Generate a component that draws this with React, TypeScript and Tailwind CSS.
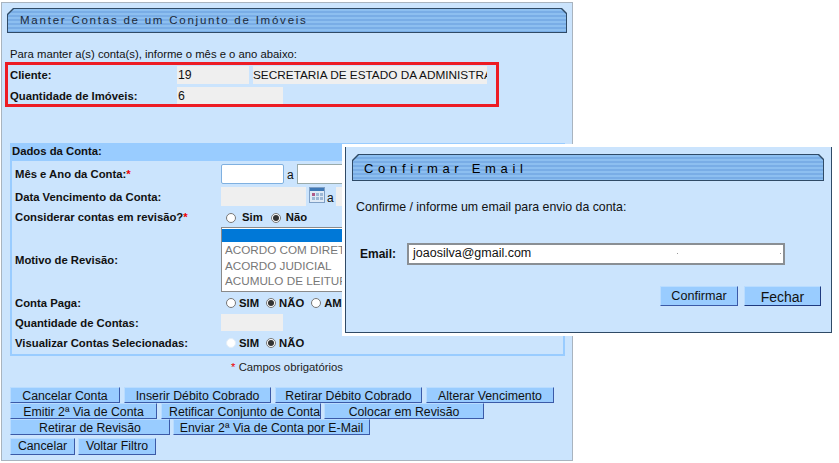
const font = "font-['Liberation_Sans',Arial,sans-serif]";

function TitleBar({ className }: { className: string }) {
  return (
    <div className={`bg-[#2f4a66] p-px ${className} [clip-path:polygon(6px_0,calc(100%-5px)_0,100%_5px,100%_100%,0_100%,0_6px)]`}>
      <div className="h-full bg-[repeating-linear-gradient(180deg,#8dbff0_0px,#8dbff0_2px,#79ade6_2px,#79ade6_4px)] [clip-path:polygon(6px_0,calc(100%-5px)_0,100%_5px,100%_100%,0_100%,0_6px)]" />
    </div>
  );
}

function Btn({ w, label, className = "h-4 pt-[2px] text-center" }: { w: string; label: string; className?: string }) {
  return (
    <button
      className={`${w} shrink-0 overflow-hidden whitespace-nowrap border border-t-[#b9dcff] border-l-[#b9dcff] border-r-[#3b5aa8] border-b-[#3b5aa8] bg-[#99ccff] text-[12.3px] leading-none text-[#111] ${className}`}
    >
      {label}
    </button>
  );
}

function Radio({ on = false, faint = false, label, labelGap = "mr-[3px]", gap = "mr-[7px]" }: { on?: boolean; faint?: boolean; label: string; labelGap?: string; gap?: string }) {
  return (
    <span className={`flex items-center ${gap}`}>
      <span className={`${labelGap} flex h-[10px] w-[10px] items-center justify-center rounded-full border bg-white ${faint ? "border-[#e4eef8]" : "border-[#777]"}`}>
        {on && <span className="h-[6px] w-[6px] rounded-full bg-[#333]" />}
      </span>
      <b className="text-[11.3px] text-[#111]">{label}</b>
    </span>
  );
}

function Row({ label, h, star = false, nudge = "", children }: { label: string; h: string; star?: boolean; nudge?: string; children?: React.ReactNode }) {
  return (
    <div className={`flex ${h} items-center`}>
      <div className={`w-[209px] pl-[3px] text-[11.3px] font-bold text-[#111] ${nudge}`}>
        {label}
        {star && <span className="text-[#e00]">*</span>}
      </div>
      <div className="flex flex-1 items-center text-[12px] text-[#111]">{children}</div>
    </div>
  );
}

function CalendarIcon() {
  return (
    <svg width="16" height="16" viewBox="0 0 16 16" className="mb-[3px] ml-[3px] shrink-0">
      <rect x="0.5" y="0.5" width="15" height="15" fill="#dfeaf6" stroke="#7f9fc4" />
      <rect x="1" y="1" width="14" height="3" fill="#3f78b5" />
      <rect x="3" y="6" width="3" height="3" fill="#b05a8a" />
      <rect x="7" y="6" width="3" height="3" fill="#9db8d6" />
      <rect x="11" y="6" width="3" height="3" fill="#9db8d6" />
      <rect x="3" y="10" width="3" height="3" fill="#9db8d6" />
      <rect x="7" y="10" width="3" height="3" fill="#9db8d6" />
      <rect x="11" y="10" width="3" height="3" fill="#9db8d6" />
    </svg>
  );
}

export default function App() {
  return (
    <div className={`relative h-[463px] w-[839px] overflow-hidden bg-white text-black ${font}`}>
      {/* Main panel */}
      <div className="ml-[1px] mt-[2px] h-[459px] w-[572px] border border-[#a9b4bf] bg-[#cbe4fd] px-[5px] pt-[5px]">
        <div className="relative h-[25px] w-[560px]">
          <TitleBar className="h-[25px] w-[560px]" />
          <div className="absolute left-[13px] top-0 flex h-[25px] items-center whitespace-nowrap text-[11.5px] tracking-[1.77px] text-[#1c2a3a]">
            Manter Contas de um Conjunto de Imóveis
          </div>
        </div>

        <p className="mt-[14px] pl-[3px] text-[11.3px] leading-[14px] text-[#111]">
          Para manter a(s) conta(s), informe o mês e o ano abaixo:
        </p>

        {/* Highlighted customer data */}
        <div className="-ml-[2px] mt-[1px] h-[45px] w-[494px] border-[3px] border-[#ed1c24] pl-[2px]">
          <div className="mt-[1px] flex h-[18px] items-center">
            <b className="w-[167px] text-[11.3px] text-[#111]">Cliente:</b>
            <div className="h-[18px] w-[72px] bg-[#efefef] pl-[1px] text-[12.3px] leading-[18px] text-[#111]">19</div>
            <div className="ml-[4px] h-[18px] w-[234px] overflow-hidden whitespace-nowrap bg-[#efefef] text-[11.8px] leading-[18px] text-[#111]">
              SECRETARIA DE ESTADO DA ADMINISTRA
            </div>
          </div>
          <div className="mt-[3px] flex h-[17px] items-center">
            <b className="w-[167px] pt-[2px] text-[11.3px] text-[#111]">Quantidade de Imóveis:</b>
            <div className="h-[17px] w-[106px] bg-[#efefef] pl-[1px] text-[12.3px] leading-[19px] text-[#111]">6</div>
          </div>
        </div>

        {/* Dados da Conta */}
        <div className="ml-[3px] mt-[36px] h-[213px] w-[555px] border-2 border-t-0 border-[#99ccff]">
          <div className="-mx-[2px] h-[18px] bg-[#99ccff] pl-[2px] text-[11.3px] font-bold leading-[17px] text-[#111]">
            Dados da Conta:
          </div>
          <Row label="Mês e Ano da Conta:" star h="h-[25px]" nudge="pt-[2px]">
            <div className="h-[20px] w-[63px] rounded-[2px] border border-[#7fb0e0] bg-white" />
            <span className="ml-[3px] mr-[3px] pt-[2px]">a</span>
            <div className="h-[20px] w-[63px] border border-[#9aa] bg-white" />
          </Row>
          <Row label="Data Vencimento da Conta:" h="h-[21px]" nudge="pt-[2px]">
            <div className="h-[19px] w-[85px] bg-[#efefef]" />
            <CalendarIcon />
            <span className="ml-[2px] mt-[3px]">a</span>
            <div className="ml-[2px] h-[19px] w-[30px] bg-[#efefef]" />
          </Row>
          <Row label="Considerar contas em revisão?" star h="h-[19px]" nudge="pt-[2px]">
            <span className="ml-[5px]" />
            <div className="flex pt-[2px]">
              <Radio label="Sim" labelGap="mr-[6px]" gap="mr-[8px]" />
              <Radio on label="Não" labelGap="mr-[5px]" />
            </div>
          </Row>
          <Row label="Motivo de Revisão:" h="h-[67px]" nudge="pt-[2px]">
            <div className="h-[65px] w-[126px] overflow-hidden whitespace-nowrap border border-[#8a8a8a] bg-white text-[11.7px] leading-[15.5px] text-[#777]">
              <div className="mt-[1px] h-[13px] bg-[#0078d7]" />
              <div className="pl-[3px]">ACORDO COM DIRET</div>
              <div className="pl-[3px]">ACORDO JUDICIAL</div>
              <div className="pl-[3px]">ACUMULO DE LEITUR</div>
            </div>
          </Row>
          <Row label="Conta Paga:" h="h-[20px]">
            <span className="ml-[5px]" />
            <Radio label="SIM" />
            <Radio on label="NÃO" />
            <Radio label="AMI" gap="mr-0" />
          </Row>
          <Row label="Quantidade de Contas:" h="h-[20px]">
            <div className="-mt-[2px] h-[17px] w-[62px] bg-[#efefef]" />
          </Row>
          <Row label="Visualizar Contas Selecionadas:" h="h-[20px]">
            <span className="ml-[5px]" />
            <Radio faint label="SIM" />
            <Radio on label="NÃO" />
          </Row>
        </div>

        <p className="mt-[4px] w-[560px] text-center text-[11.3px] leading-[14px] text-[#222]">
          <span className="text-[#e00]">*</span> Campos obrigatórios
        </p>

        {/* Action buttons */}
        <div className="ml-[3px] mt-[13px] flex flex-col">
          <div className="flex gap-[4px]">
            <Btn w="w-[110px]" label="Cancelar Conta" />
            <Btn w="w-[147px]" label="Inserir Débito Cobrado" />
            <Btn w="w-[147px]" label="Retirar Débito Cobrado" />
            <Btn w="w-[128px]" label="Alterar Vencimento" />
          </div>
          <div className="flex">
            <Btn w="w-[147px]" label="Emitir 2ª Via de Conta" />
            <Btn w="ml-[4px] w-[160px]" label="Retificar Conjunto de Conta" className="h-4 pt-[2px] pl-[7px] text-left" />
            <Btn w="ml-[3px] w-[160px]" label="Colocar em Revisão" />
          </div>
          <div className="flex gap-[3px]">
            <Btn w="w-[160px]" label="Retirar de Revisão" />
            <Btn w="w-[197px]" label="Enviar 2ª Via de Conta por E-Mail" />
          </div>
          <div className="mt-[3px] flex gap-[3px]">
            <Btn w="w-[65px]" label="Cancelar" className="h-[17px] text-center" />
            <Btn w="w-[78px]" label="Voltar Filtro" className="h-[17px] text-center" />
          </div>
        </div>
      </div>

      {/* Confirmar Email dialog */}
      <div className="absolute left-[342px] top-[144px] border-[3px] border-white">
        <div className="h-[186px] w-[487px] border-x border-b border-[#2f4a66] bg-[#cbe4fd] px-[6px] pt-[7px]">
          <div className="relative h-[27px] w-[472px]">
            <TitleBar className="h-[27px] w-[472px]" />
            <div className="absolute left-[12px] top-[1px] flex h-[27px] items-center whitespace-nowrap text-[13px] tracking-[4.7px] text-black">
              Confirmar Email
            </div>
          </div>
          <p className="mt-[19px] pl-[4px] text-[12.35px] leading-[14px] text-[#111]">
            Confirme / informe um email para envio da conta:
          </p>
          <div className="mt-[29px] flex items-center">
            <b className="w-[54px] pl-[8px] text-[12px] text-[#111]">Email:</b>
            <div className="relative ml-[1px] h-[22px] w-[378px] border-2 border-[#8a8f94] bg-white pl-[4px] text-[12.5px] leading-[17px] text-[#111]">
              joaosilva@gmail.com
              <span className="absolute left-[268px] top-[8px] h-px w-px bg-[#999]" />
              <span className="absolute left-[371px] top-[8px] h-px w-px bg-[#999]" />
            </div>
          </div>
          <div className="mt-[21px] flex justify-end gap-[6px] pr-[4px]">
            <button className="h-[20px] w-[78px] border border-t-[#b9dcff] border-l-[#b9dcff] border-r-[#3b5aa8] border-b-[#3b5aa8] bg-[#99ccff] text-[12.6px] text-[#111]">
              Confirmar
            </button>
            <button className="h-[20px] w-[77px] border border-t-[#b9dcff] border-l-[#b9dcff] border-r-[#1f3a80] border-b-[#1f3a80] bg-[#99ccff] pb-[4px] text-[14px] text-[#111]">
              Fechar
            </button>
          </div>
        </div>
      </div>
    </div>
  );
}
